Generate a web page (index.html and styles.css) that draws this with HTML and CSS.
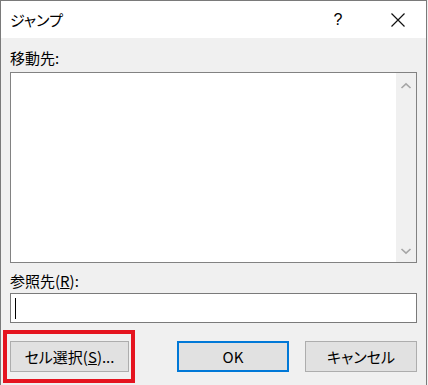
FILE: index.html
```html
<!DOCTYPE html>
<html>

<head>
    <title>ジャンプ</title>
    <meta charset="utf-8">
    <link rel="stylesheet" href="styles.css">
</head>

<body>
    <div class="dialog">
        <div class="titleBar">
            <span class="titleText">ジャンプ</span>
            <span class="titleHelp">?</span>
            <span class="titleClose">
                <svg width="16" height="16" viewBox="0 0 16 16">
                    <path d="M1.5 1.5 L14.5 14.5 M14.5 1.5 L1.5 14.5" stroke="#111" stroke-width="1.2" fill="none" />
                </svg>
            </span>
        </div>
        <div class="dialogBody">
            <div class="fieldLabel">移動先:</div>
            <div class="listBox">
                <div class="listItems"></div>
                <div class="scrollBar">
                    <svg width="12" height="8" viewBox="0 0 12 8">
                        <path d="M1.5 6 L6 1.8 L10.5 6" stroke="#a6a6a6" stroke-width="1.6" fill="none" />
                    </svg>
                    <svg width="12" height="8" viewBox="0 0 12 8">
                        <path d="M1.5 2 L6 6.2 L10.5 2" stroke="#a6a6a6" stroke-width="1.6" fill="none" />
                    </svg>
                </div>
            </div>
            <div class="fieldLabel refLabel">参照先(<u>R</u>):</div>
            <div class="textBox"><span class="caret"></span></div>
            <div class="buttonRow">
                <button class="btn btnSelect highlighted">セル選択(<u>S</u>)...</button>
                <button class="btn btnDefault">OK</button>
                <button class="btn">キャンセル</button>
            </div>
        </div>
    </div>
</body>

</html>
```
FILE: styles.css
```css
body {
    margin: 0;
    background-color: #f0f0f0;
    font-family: "Noto Sans CJK JP", "Noto Sans", sans-serif;
    font-size: 15px;
    font-feature-settings: "palt";
    color: #000;
}

.dialog {
    width: 425px;
    height: 384px;
    overflow: hidden;
    border: 1px solid #7a7a7a;
    border-bottom: none;
    background-color: #f0f0f0;
}

.titleBar {
    display: flex;
    align-items: center;
    height: 37px;
    background-color: #fff;
    padding-left: 9px;
}

.titleText {
    flex: 1;
    font-size: 15px;
}

.titleHelp {
    width: 46px;
    text-align: center;
    font-size: 16px;
    font-family: "Liberation Sans", sans-serif;
    margin-right: 14px;
}

.titleClose {
    display: flex;
    justify-content: center;
    align-items: center;
    width: 46px;
    margin-right: 5px;
}

.dialogBody {
    padding: 10px 9px 0 9px;
}

.fieldLabel {
    line-height: 20px;
    margin-bottom: 4px;
}

.refLabel {
    margin-top: 7px;
    line-height: 22px;
    margin-bottom: 1px;
}

.listBox {
    display: flex;
    height: 189px;
    border: 1px solid #828282;
    background-color: #fff;
}

.listItems {
    flex: 1;
}

.scrollBar {
    width: 20px;
    background-color: #f0f0f0;
    display: flex;
    flex-direction: column;
    justify-content: space-between;
    align-items: center;
    padding: 9px 0 7px 0;
}

.textBox {
    height: 28px;
    border: 1px solid #7a7a7a;
    background-color: #fff;
    display: flex;
    align-items: center;
    padding-left: 4px;
}

.caret {
    width: 1px;
    height: 21px;
    background-color: #000;
}

.buttonRow {
    display: flex;
    gap: 16px;
    margin-top: 18px;
}

.btn {
    height: 31px;
    width: 112px;
    padding: 0;
    border: 1px solid #adadad;
    background-color: #e1e1e1;
    font-family: "Noto Sans CJK JP", "Noto Sans", sans-serif;
    font-feature-settings: "palt";
    font-size: 15px;
    color: #000;
}

.btnSelect {
    width: 119px;
    margin-right: auto;
}

.btnDefault {
    border: 2px solid #0078d7;
}

.highlighted {
    position: relative;
}

.highlighted::after {
    content: "";
    position: absolute;
    top: -12px;
    left: -8px;
    right: -7px;
    bottom: -12px;
    border: 4px solid #e5141f;
}
```
